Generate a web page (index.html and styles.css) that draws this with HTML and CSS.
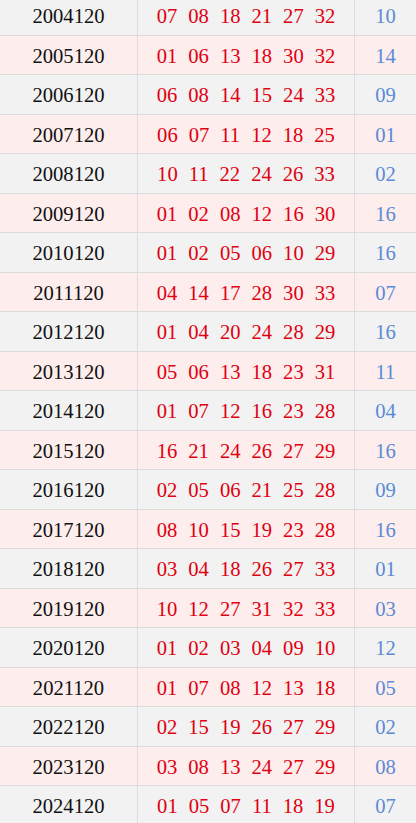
FILE: index.html
```html
<!DOCTYPE html>
<html>
<head>
<meta charset="utf-8">
<link rel="stylesheet" href="styles.css">
</head>
<body>
<div class="table">
  <div class="row"><div class="c-issue">2004120</div><div class="c-red"><span>07</span><span>08</span><span>18</span><span>21</span><span>27</span><span>32</span></div><div class="c-blue">10</div></div>
  <div class="row"><div class="c-issue">2005120</div><div class="c-red"><span>01</span><span>06</span><span>13</span><span>18</span><span>30</span><span>32</span></div><div class="c-blue">14</div></div>
  <div class="row"><div class="c-issue">2006120</div><div class="c-red"><span>06</span><span>08</span><span>14</span><span>15</span><span>24</span><span>33</span></div><div class="c-blue">09</div></div>
  <div class="row"><div class="c-issue">2007120</div><div class="c-red"><span>06</span><span>07</span><span>11</span><span>12</span><span>18</span><span>25</span></div><div class="c-blue">01</div></div>
  <div class="row"><div class="c-issue">2008120</div><div class="c-red"><span>10</span><span>11</span><span>22</span><span>24</span><span>26</span><span>33</span></div><div class="c-blue">02</div></div>
  <div class="row"><div class="c-issue">2009120</div><div class="c-red"><span>01</span><span>02</span><span>08</span><span>12</span><span>16</span><span>30</span></div><div class="c-blue">16</div></div>
  <div class="row"><div class="c-issue">2010120</div><div class="c-red"><span>01</span><span>02</span><span>05</span><span>06</span><span>10</span><span>29</span></div><div class="c-blue">16</div></div>
  <div class="row"><div class="c-issue">2011120</div><div class="c-red"><span>04</span><span>14</span><span>17</span><span>28</span><span>30</span><span>33</span></div><div class="c-blue">07</div></div>
  <div class="row"><div class="c-issue">2012120</div><div class="c-red"><span>01</span><span>04</span><span>20</span><span>24</span><span>28</span><span>29</span></div><div class="c-blue">16</div></div>
  <div class="row"><div class="c-issue">2013120</div><div class="c-red"><span>05</span><span>06</span><span>13</span><span>18</span><span>23</span><span>31</span></div><div class="c-blue">11</div></div>
  <div class="row"><div class="c-issue">2014120</div><div class="c-red"><span>01</span><span>07</span><span>12</span><span>16</span><span>23</span><span>28</span></div><div class="c-blue">04</div></div>
  <div class="row"><div class="c-issue">2015120</div><div class="c-red"><span>16</span><span>21</span><span>24</span><span>26</span><span>27</span><span>29</span></div><div class="c-blue">16</div></div>
  <div class="row"><div class="c-issue">2016120</div><div class="c-red"><span>02</span><span>05</span><span>06</span><span>21</span><span>25</span><span>28</span></div><div class="c-blue">09</div></div>
  <div class="row"><div class="c-issue">2017120</div><div class="c-red"><span>08</span><span>10</span><span>15</span><span>19</span><span>23</span><span>28</span></div><div class="c-blue">16</div></div>
  <div class="row"><div class="c-issue">2018120</div><div class="c-red"><span>03</span><span>04</span><span>18</span><span>26</span><span>27</span><span>33</span></div><div class="c-blue">01</div></div>
  <div class="row"><div class="c-issue">2019120</div><div class="c-red"><span>10</span><span>12</span><span>27</span><span>31</span><span>32</span><span>33</span></div><div class="c-blue">03</div></div>
  <div class="row"><div class="c-issue">2020120</div><div class="c-red"><span>01</span><span>02</span><span>03</span><span>04</span><span>09</span><span>10</span></div><div class="c-blue">12</div></div>
  <div class="row"><div class="c-issue">2021120</div><div class="c-red"><span>01</span><span>07</span><span>08</span><span>12</span><span>13</span><span>18</span></div><div class="c-blue">05</div></div>
  <div class="row"><div class="c-issue">2022120</div><div class="c-red"><span>02</span><span>15</span><span>19</span><span>26</span><span>27</span><span>29</span></div><div class="c-blue">02</div></div>
  <div class="row"><div class="c-issue">2023120</div><div class="c-red"><span>03</span><span>08</span><span>13</span><span>24</span><span>27</span><span>29</span></div><div class="c-blue">08</div></div>
  <div class="row"><div class="c-issue">2024120</div><div class="c-red"><span>01</span><span>05</span><span>07</span><span>11</span><span>18</span><span>19</span></div><div class="c-blue">07</div></div>
</div>
</body>
</html>
```

FILE: styles.css
```css
html, body {
  margin: 0;
  padding: 0;
  background: #f2f2f2;
  overflow: hidden;
}
.table {
  width: 416px;
  margin-top: -4px;
  font-family: "Liberation Serif", "DejaVu Serif", serif;
  font-size: 20.6px;
}
.row {
  display: grid;
  grid-template-columns: 137px 1px 216px 1px 61px;
  height: 39.5px;
  box-sizing: border-box;
  border-bottom: 1px solid #dcdcdc;
  background: #f2f2f2;
}
.row:nth-child(even) {
  background: #fdeded;
}
.row > div {
  display: flex;
  align-items: center;
  justify-content: center;
  padding-top: 3px;
}
.c-issue {
  grid-column: 1;
  color: #111;
  border-right: 1px solid #dcdcdc;
  margin-right: -1px;
}
.c-red {
  grid-column: 3;
  color: #e0000f;
  gap: 11px;
  border-left: 1px solid #dcdcdc;
  margin-left: -1px;
}
.c-blue {
  grid-column: 5;
  color: #5b8ad6;
  border-left: 1px solid #dcdcdc;
  margin-left: -1px;
}
```
